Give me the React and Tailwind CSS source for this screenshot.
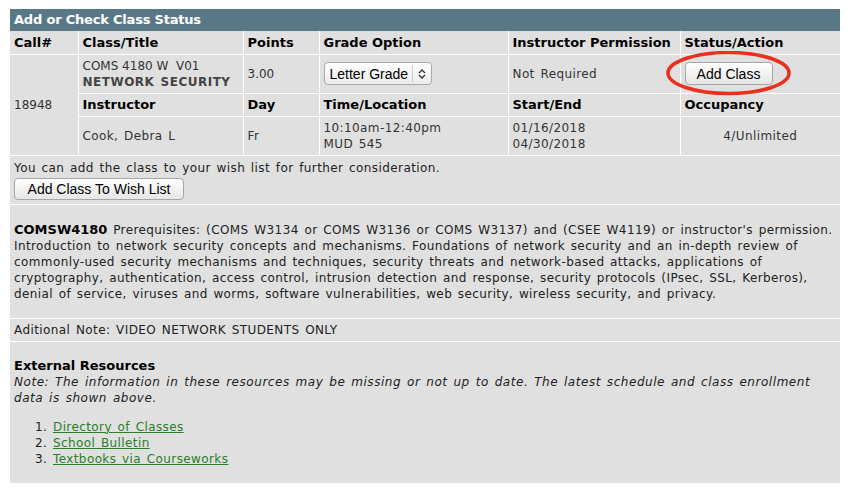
import React from 'react';

const th = "border border-white px-1 text-left font-bold text-[13px] text-black";
const td = "border border-white px-1 text-[12px] text-[#333] leading-[16px] tracking-[0.4px] [word-spacing:1.5px]";
const body = "text-[12px] leading-[16px] text-[#222] tracking-[0.4px] [word-spacing:1.5px]";

const SelectBox = () => (
    <div className="flex h-[23px] w-[108px] items-center rounded-[4px] border border-[#a9a9a9] bg-gradient-to-b from-white to-[#ececec] tracking-normal [word-spacing:0px]" style={{ fontFamily: '"Liberation Sans", Arial, sans-serif' }}>
        <span className="flex-1 pl-[5px] text-[14px] text-black">Letter Grade</span>
        <span className="h-[17px] w-px bg-[#c8c8c8]" />
        <svg width="14" height="12" viewBox="0 0 14 12" className="mx-[2px]">
            <path d="M4 5 L7 2 L10 5" fill="none" stroke="#333" strokeWidth="1.3" />
            <path d="M4 7 L7 10 L10 7" fill="none" stroke="#333" strokeWidth="1.3" />
        </svg>
    </div>
);

const Button = ({ children, className }) => (
    <button
        className={"rounded-[4px] border border-[#a6a6a6] bg-gradient-to-b from-white to-[#e6e6e6] text-[14px] text-black tracking-normal [word-spacing:0px] " + className}
        style={{ fontFamily: '"Liberation Sans", Arial, sans-serif' }}
    >
        {children}
    </button>
);

const App = () => {
    return (
        <div className="min-h-[493px] bg-white pt-[9px] px-[10px]" style={{ fontFamily: '"DejaVu Sans", Verdana, sans-serif' }}>
            <div className="relative w-[830px] bg-[#e0e0e0]">
                <div className="h-[22px] bg-[#587888] px-1 text-[13px] font-bold leading-[22px] text-white tracking-[-0.2px]">
                    Add or Check Class Status
                </div>
                <table className="w-full table-fixed border-collapse">
                    <colgroup>
                        <col className="w-[68px]" />
                        <col className="w-[165px]" />
                        <col className="w-[76px]" />
                        <col className="w-[189px]" />
                        <col className="w-[172px]" />
                        <col className="w-[160px]" />
                    </colgroup>
                    <tbody>
                        <tr className="h-[23px]">
                            <th className={th + " border-t-0 border-l-0"}>Call#</th>
                            <th className={th + " border-t-0"}>Class/Title</th>
                            <th className={th + " border-t-0"}>Points</th>
                            <th className={th + " border-t-0"}>Grade Option</th>
                            <th className={th + " border-t-0"}>Instructor Permission</th>
                            <th className={th + " border-t-0 border-r-0"}>Status/Action</th>
                        </tr>
                        <tr className="h-[39px]">
                            <td rowSpan={3} className={td + " border-l-0 tracking-normal"}>18948</td>
                            <td className={td}>
                                <div className="tracking-normal [word-spacing:0px]">COMS 4180 W&nbsp;&nbsp;V01</div>
                                <div className="font-bold text-[#444] tracking-[0.5px]">NETWORK SECURITY</div>
                            </td>
                            <td className={td + " tracking-normal"}>3.00</td>
                            <td className={td}><SelectBox /></td>
                            <td className={td}>Not Required</td>
                            <td className={td + " border-r-0"}>
                                <Button className="h-[23px] w-[88px]">Add Class</Button>
                            </td>
                        </tr>
                        <tr className="h-[23px]">
                            <th className={th}>Instructor</th>
                            <th className={th}>Day</th>
                            <th className={th}>Time/Location</th>
                            <th className={th}>Start/End</th>
                            <th className={th + " border-r-0"}>Occupancy</th>
                        </tr>
                        <tr className="h-[39px]">
                            <td className={td}>Cook, Debra L</td>
                            <td className={td}>Fr</td>
                            <td className={td}>
                                <div>10:10am-12:40pm</div>
                                <div>MUD 545</div>
                            </td>
                            <td className={td}>
                                <div>01/16/2018</div>
                                <div>04/30/2018</div>
                            </td>
                            <td className={td + " border-r-0 text-center"}>4/Unlimited</td>
                        </tr>
                    </tbody>
                </table>

                <div className={"h-[48px] px-1 pt-[4px] " + body}>
                    <div>You can add the class to your wish list for further consideration.</div>
                    <Button className="mt-[2px] h-[22px] w-[170px]">Add Class To Wish List</Button>
                </div>

                <div className={"border-t border-white px-1 pt-[17px] pb-[16px] " + body}>
                    <span className="font-bold text-[13px] leading-[15px] text-black tracking-normal">COMSW4180</span> Prerequisites: (COMS W3134 or COMS W3136 or COMS W3137) and (CSEE W4119) or instructor's permission. Introduction to network security concepts and mechanisms. Foundations of network security and an in-depth review of commonly-used security mechanisms and techniques, security threats and network-based attacks, applications of cryptography, authentication, access control, intrusion detection and response, security protocols (IPsec, SSL, Kerberos), denial of service, viruses and worms, software vulnerabilities, web security, wireless security, and privacy.
                </div>

                <div className={"h-[23px] border-t border-white px-1 leading-[22px] " + body}>
                    Aditional Note: VIDEO NETWORK STUDENTS ONLY
                </div>

                <div className={"border-t border-white px-1 pt-[16px] pb-[16px] " + body}>
                    <div className="text-[13px] font-bold text-black tracking-normal [word-spacing:0px]">External Resources</div>
                    <div className="italic tracking-[0.55px]">
                        Note: The information in these resources may be missing or not up to date. The latest schedule and class enrollment data is shown above.
                    </div>
                    <ol className="mt-[13px] list-decimal pl-[39px]">
                        <li><a href="#" className="text-[#2a7d2a] underline">Directory of Classes</a></li>
                        <li><a href="#" className="text-[#2a7d2a] underline">School Bulletin</a></li>
                        <li><a href="#" className="text-[#2a7d2a] underline">Textbooks via Courseworks</a></li>
                    </ol>
                </div>

                <svg className="pointer-events-none absolute left-[656px] top-[42px]" width="126" height="46" viewBox="0 0 126 46">
                    <ellipse cx="62.5" cy="22" rx="60.5" ry="20.5" fill="none" stroke="#e8301c" strokeWidth="3.5" />
                </svg>
            </div>
        </div>
    );
};

export default App;
